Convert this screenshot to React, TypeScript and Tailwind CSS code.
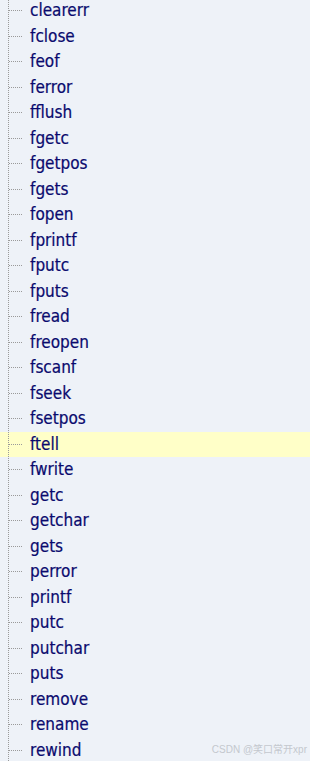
const items = [
    "clearerr", "fclose", "feof", "ferror", "fflush", "fgetc", "fgetpos", "fgets", "fopen", "fprintf",
    "fputc", "fputs", "fread", "freopen", "fscanf", "fseek", "fsetpos", "ftell", "fwrite", "getc",
    "getchar", "gets", "perror", "printf", "putc", "putchar", "puts", "remove", "rename", "rewind",
];

const App = () => {
    return (
        <div className="relative h-[761px] w-[310px] overflow-hidden bg-[#eef2f8] font-['DejaVu_Sans_Condensed','DejaVu_Sans',sans-serif]">
            {/* Tree lines */}
            <div className="absolute left-[8px] top-0 h-full border-l border-dotted border-[#9a9a9a]" />

            <ul className="-mt-[2px]">
                {items.map((name) => (
                    <li
                        key={name}
                        className={`flex h-[25.5px] items-center ${name === "ftell" ? "bg-[#ffffc8]" : ""}`}
                    >
                        <span className="ml-[9px] w-[13px] border-t border-dotted border-[#9a9a9a]" />
                        <span className="ml-[8px] text-[17px] leading-none text-[#0a0a6e] [-webkit-text-stroke:0.2px_#0a0a6e]">{name}</span>
                    </li>
                ))}
            </ul>

            {/* Watermark */}
            <div className="absolute bottom-[4px] right-[3px] text-[10px] text-[#c4c8ce] font-['Liberation_Sans','Noto_Sans_CJK_SC',sans-serif]">
                CSDN @笑口常开xpr
            </div>
        </div>
    );
};

export default App;
